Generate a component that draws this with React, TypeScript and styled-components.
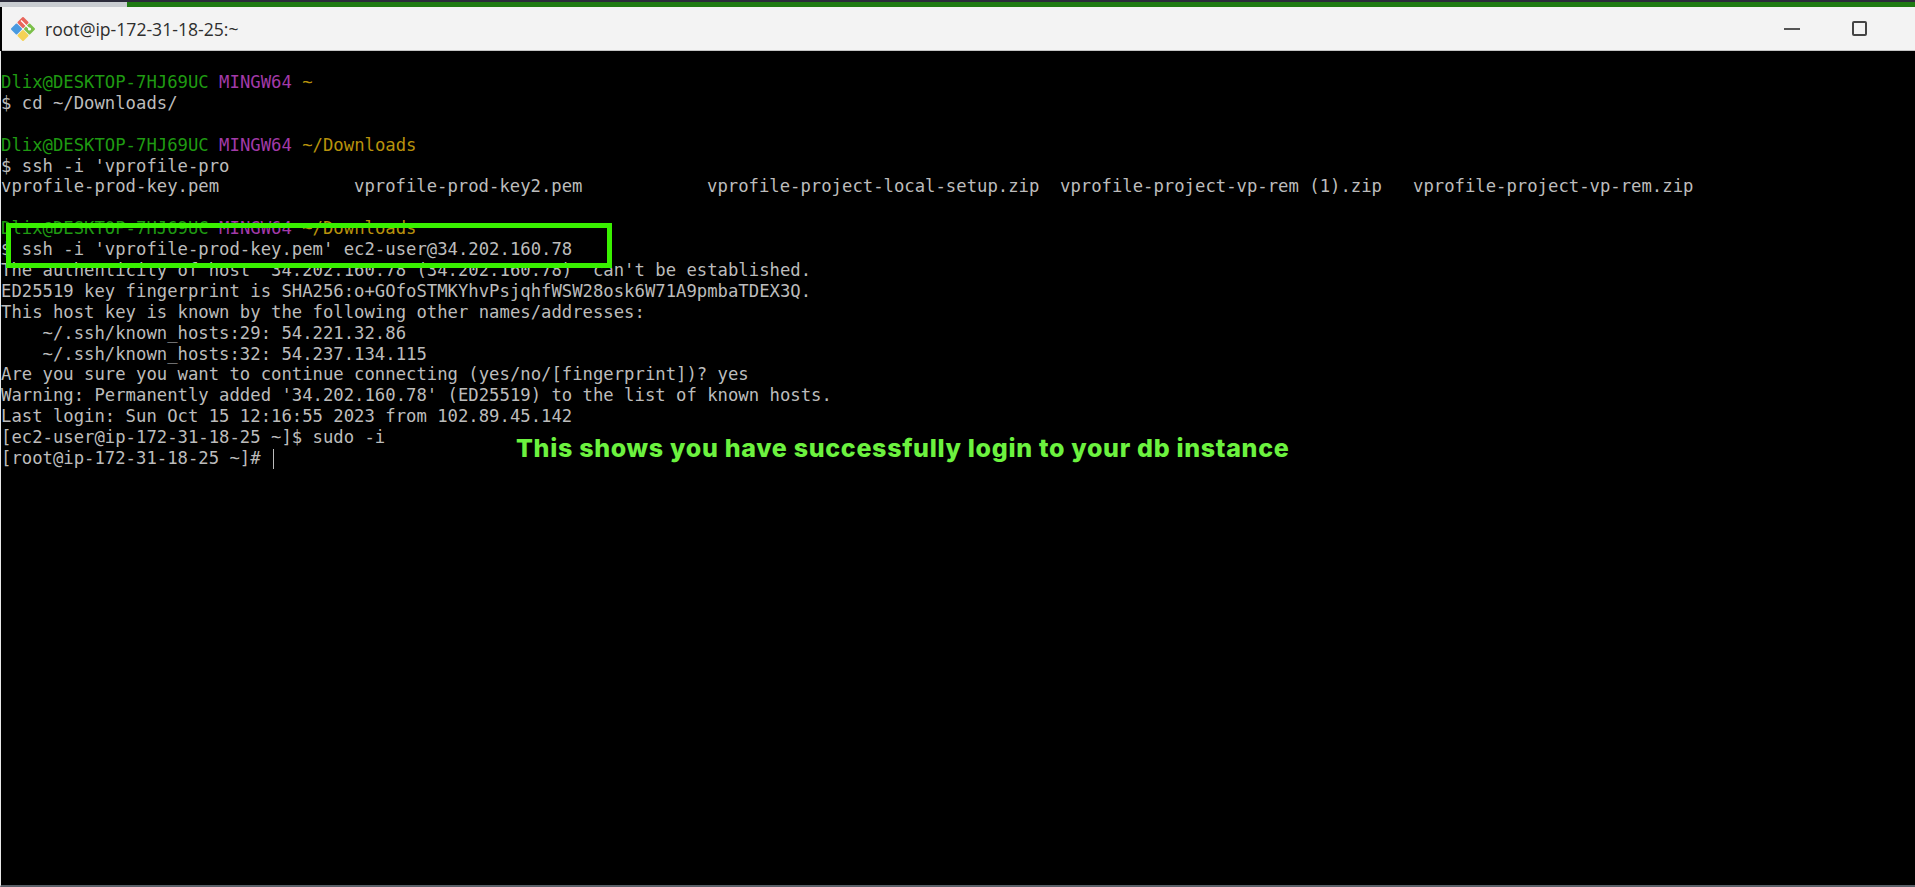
import styled, { createGlobalStyle } from "styled-components";

const GlobalStyle = createGlobalStyle`
  html, body {
    margin: 0;
    padding: 0;
    background: #000;
  }
  #root {
    width: 1915px;
    height: 887px;
    overflow: hidden;
  }
`;

const Page = styled.div`
  width: 1915px;
  height: 887px;
  display: flex;
  flex-direction: column;
  background: #000;
`;

const TopStrip = styled.div`
  height: 7px;
  flex: none;
  display: flex;
  background: #2b2b3a;
  padding-top: 2px;
  box-sizing: border-box;
`;

const StripLight = styled.div`
  width: 127px;
  background: #c8ccd0;
`;

const StripGreen = styled.div`
  flex: 1;
  background: #1f7a12;
`;

const TitleBar = styled.header`
  height: 44px;
  flex: none;
  display: flex;
  align-items: center;
  box-sizing: border-box;
  padding-left: 8px;
  margin-left: 2px;
  background: #f3f3f3;
  border-bottom: 1px solid #c4c4c4;
`;

const AppTitle = styled.span`
  margin-left: 9px;
  font-family: "Open Sans", "Liberation Sans", sans-serif;
  font-size: 17.6px;
  color: #2e2e2e;
`;

const WindowButtons = styled.div`
  margin-left: auto;
  display: flex;
  align-items: center;
`;

const MinimizeIcon = styled.span`
  width: 16px;
  height: 2px;
  background: #555;
  margin-right: 52px;
`;

const MaximizeIcon = styled.span`
  width: 15px;
  height: 15px;
  box-sizing: border-box;
  border: 2px solid #444;
  border-radius: 2px;
  margin-right: 48px;
`;

const Terminal = styled.main`
  position: relative;
  flex: 1;
  box-sizing: border-box;
  padding: 21px 0 0 0;
  border-left: 1px solid #e8e8e8;
  border-bottom: 2px solid #5a6068;
  background: #000;
  font-family: "DejaVu Sans Mono", "Liberation Mono", monospace;
  font-size: 17.25px;
  line-height: 20.9px;
  color: #bcbcbc;
  white-space: pre;
`;

const Line = styled.div`
  height: 20.9px;
`;

const User = styled.span`
  color: #1f9a12;
`;

const Shell = styled.span`
  color: #a23aa8;
`;

const Path = styled.span`
  color: #b8920c;
`;

const ListingRow = styled.div`
  display: grid;
  grid-template-columns: repeat(4, 353px) auto;
  height: 20.9px;
`;

const Highlight = styled.div`
  position: absolute;
  left: 5px;
  top: 172px;
  width: 606px;
  height: 45px;
  box-sizing: border-box;
  border: 5px solid #39f000;
`;

const Note = styled.div`
  position: absolute;
  left: 515px;
  top: 387px;
  font-family: "Inter", "Open Sans", sans-serif;
  font-size: 25px;
  font-weight: 800;
  letter-spacing: 0.69px;
  color: #6cf23f;
`;

const Cursor = styled.span`
  display: inline-block;
  width: 1px;
  height: 20px;
  margin-left: 2px;
  vertical-align: bottom;
  background: #bcbcbc;
`;

const GitLogo = () => (
  <svg width="26" height="26" viewBox="0 0 26 26">
    <g strokeLinejoin="round" strokeWidth="2">
      <path d="M13 2 L17.5 6.5 L13 11 L8.5 6.5 Z" fill="#e8665c" stroke="#e8665c" />
      <path d="M19.5 8.5 L24 13 L19.5 17.5 L15 13 Z" fill="#7cc04a" stroke="#7cc04a" />
      <path d="M13 15 L17.5 19.5 L13 24 L8.5 19.5 Z" fill="#f5d255" stroke="#f5d255" />
      <path d="M6.5 8.5 L11 13 L6.5 17.5 L2 13 Z" fill="#4a9ae0" stroke="#4a9ae0" />
    </g>
    <path d="M11 4.5 L15.5 9 L19 12.5" stroke="#fff" strokeWidth="1.3" fill="none" />
    <circle cx="19.5" cy="13" r="1.6" fill="#fff" />
  </svg>
);

const Prompt = ({ path }: { path: string }) => (
  <Line>
    <User>Dlix@DESKTOP-7HJ69UC</User> <Shell>MINGW64</Shell> <Path>{path}</Path>
  </Line>
);

const files = [
  "vprofile-prod-key.pem",
  "vprofile-prod-key2.pem",
  "vprofile-project-local-setup.zip",
  "vprofile-project-vp-rem (1).zip",
  "vprofile-project-vp-rem.zip",
];

const output = [
  "The authenticity of host '34.202.160.78 (34.202.160.78)' can't be established.",
  "ED25519 key fingerprint is SHA256:o+GOfoSTMKYhvPsjqhfWSW28osk6W71A9pmbaTDEX3Q.",
  "This host key is known by the following other names/addresses:",
  "    ~/.ssh/known_hosts:29: 54.221.32.86",
  "    ~/.ssh/known_hosts:32: 54.237.134.115",
  "Are you sure you want to continue connecting (yes/no/[fingerprint])? yes",
  "Warning: Permanently added '34.202.160.78' (ED25519) to the list of known hosts.",
  "Last login: Sun Oct 15 12:16:55 2023 from 102.89.45.142",
  "[ec2-user@ip-172-31-18-25 ~]$ sudo -i",
];

export default function App() {
  return (
    <Page>
      <GlobalStyle />
      <TopStrip>
        <StripLight />
        <StripGreen />
      </TopStrip>
      <TitleBar>
        <GitLogo />
        <AppTitle>root@ip-172-31-18-25:~</AppTitle>
        <WindowButtons>
          <MinimizeIcon />
          <MaximizeIcon />
        </WindowButtons>
      </TitleBar>
      <Terminal>
        <Prompt path="~" />
        <Line>$ cd ~/Downloads/</Line>
        <Line> </Line>
        <Prompt path="~/Downloads" />
        <Line>$ ssh -i 'vprofile-pro</Line>
        <ListingRow>
          {files.map((file) => (
            <span key={file}>{file}</span>
          ))}
        </ListingRow>
        <Line> </Line>
        <Prompt path="~/Downloads" />
        <Line>$ ssh -i 'vprofile-prod-key.pem' ec2-user@34.202.160.78</Line>
        {output.map((text) => (
          <Line key={text}>{text}</Line>
        ))}
        <Line>
          [root@ip-172-31-18-25 ~]# <Cursor />
        </Line>
        <Highlight />
        <Note>This shows you have successfully login to your db instance</Note>
      </Terminal>
    </Page>
  );
}
